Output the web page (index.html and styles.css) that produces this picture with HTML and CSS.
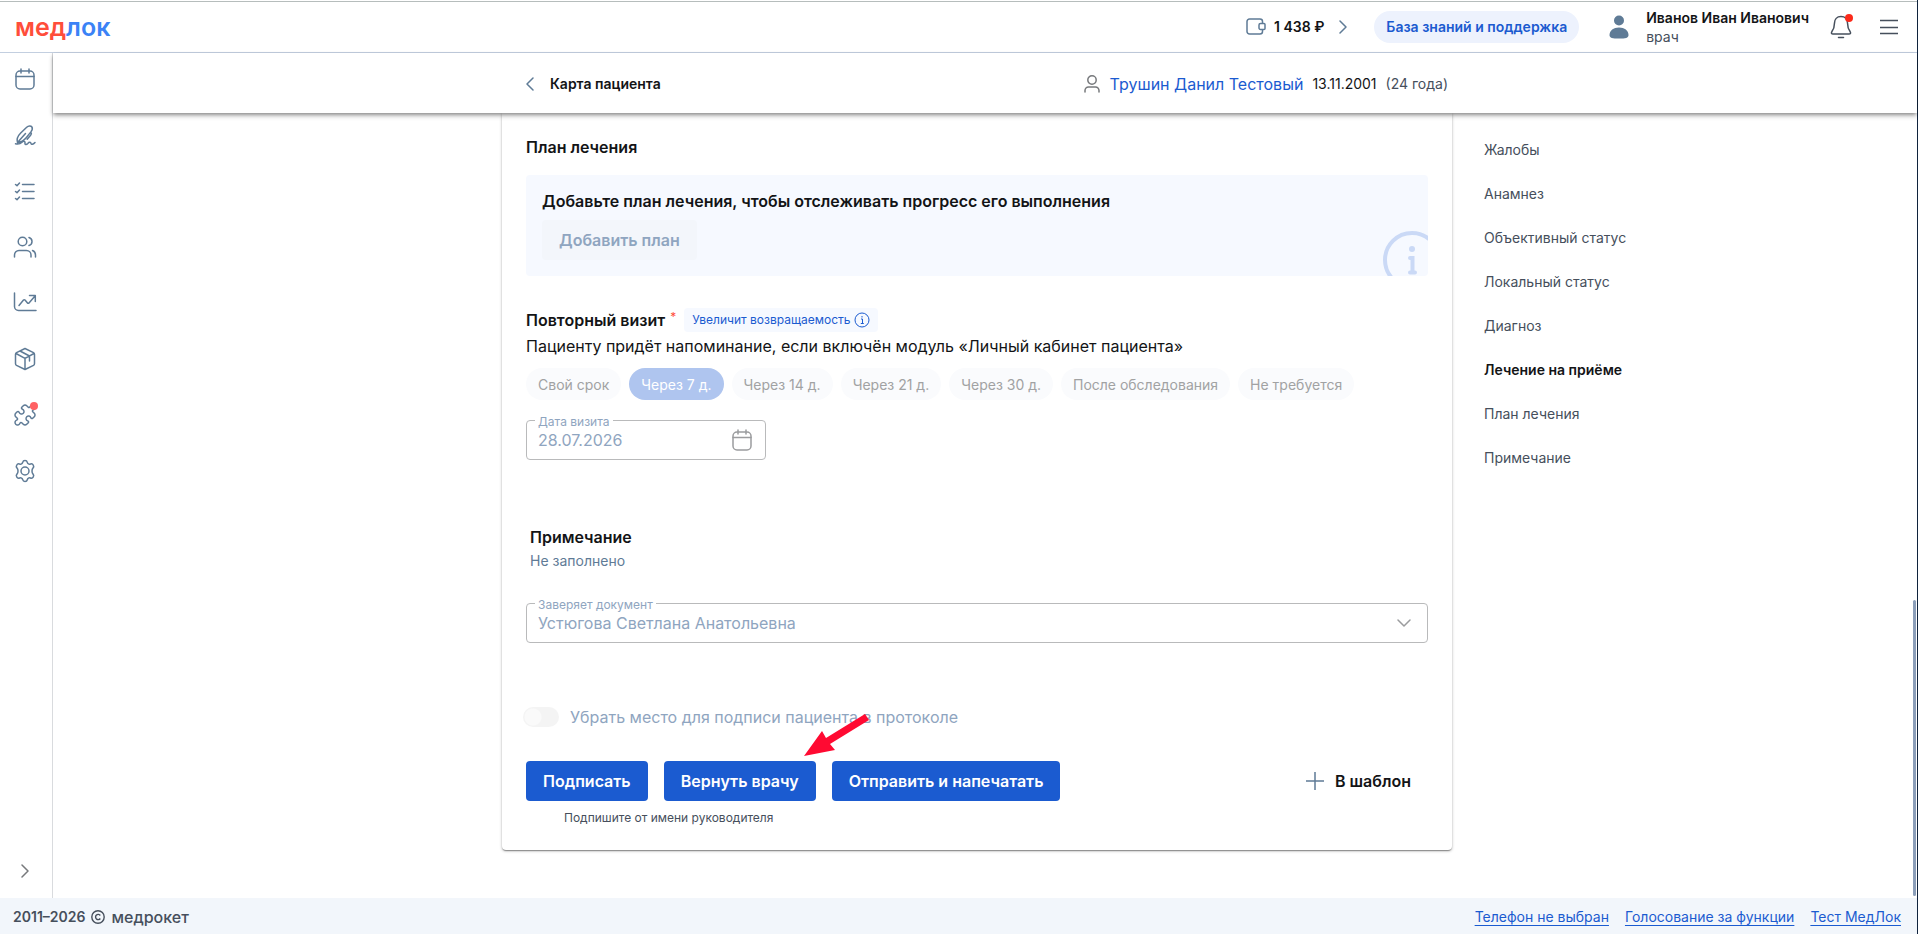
FILE: index.html
```html
<!DOCTYPE html>
<html lang="ru">
<head>
<meta charset="utf-8">
<meta name="viewport" content="width=device-width, initial-scale=1">
<title>Карта пациента — МедЛок</title>
<link rel="stylesheet" href="styles.css">
</head>
<body>
<div class="page">
  <header class="topbar">
    <a class="logo" href="#"><span class="logo-red">мед</span><span class="logo-blue">лок</span></a>
    <div class="topbar-right">
      <a class="balance" href="#">
        <svg class="icon" width="20" height="20" viewBox="0 0 20 20"><path d="M16.5 6V4.500a2.500 2.500 0 0 0-2.500-2.500H3.500A2.500 2.500 0 0 0 1 4.500v10A2.500 2.500 0 0 0 3.500 17H14a2.500 2.500 0 0 0 2.500-2.500V13M14.500 6.500H18a1 1 0 0 1 1 1V11.500a1 1 0 0 1-1 1H14.500a1.500 1.500 0 0 1-1.500-1.500V8a1.500 1.500 0 0 1 1.500-1.500z"/></svg>
        <span>1 438 ₽</span>
        <svg class="icon balance-arrow" width="8" height="14" viewBox="0 0 8 14"><path d="M1 1l6 6-6 6"/></svg>
      </a>
      <a class="help" href="#">База знаний и поддержка</a>
      <div class="user">
        <svg width="20" height="24" viewBox="0 0 20 24"><circle cx="10" cy="5.500" r="5" fill="#5f7b96"/><path d="M.5 20c0-4.500 4-7.500 9.500-7.500s9.500 3 9.500 7.500c0 3-3 3.500-9.500 3.500S.5 23 .5 20z" fill="#5f7b96"/></svg>
        <div class="user-text"><span class="user-name">Иванов Иван Иванович</span><span class="user-role">врач</span></div>
      </div>
      <button class="icon-button bell" aria-label="Уведомления">
        <svg class="icon dark" width="22" height="24" viewBox="0 0 22 24"><path d="M11 1.500c-4.200 0-6.500 3-6.500 6.500 0 5-1 6.500-2.700 8.800-.8 1.200-.3 2.200 1.200 2.200h16c1.500 0 2-1 1.200-2.200C18.500 14.500 17.500 13 17.500 8c0-3.500-2.300-6.500-6.500-6.500zM8.500 22.500h5"/></svg>
        <span class="dot"></span>
      </button>
      <button class="icon-button" aria-label="Меню">
        <svg class="icon dark" width="18" height="16" viewBox="0 0 18 16"><path d="M0 1.500h18M0 8.500h18M0 14.500h18"/></svg>
      </button>
    </div>
  </header>

  <nav class="sidebar" aria-label="Разделы">
    <a href="#" aria-label="Календарь"><svg class="icon" width="24" height="24" viewBox="0 0 24 24"><rect x="3" y="4" width="18" height="18" rx="4"/><path d="M3 9.500h18M8 2v4M16 2v4"/></svg></a>
    <a href="#" aria-label="Подпись"><svg class="icon" width="24" height="24" viewBox="0 0 24 24"><path d="M4.500 19.500c-1-3 .2-6.500 3.200-9.500l6-5.800c1.700-1.600 4.300-1.600 5.200-.2s.3 3.200-1 4.900l-4.700 5.800c-2.400 2.900-5 4.500-8.700 4.800zl8-9M18 9.500c.8.800.3 1.800-.4 2.700l-3.400 4M2.500 20.800c2.500.5 4.800.2 6.500-1.600 1.700-1.700 3.500-.6 3 1-.4 1.700 1.500 1.800 2.800.3 1.300-1.700 3-1.500 3.200 0 .2 1.300 2 1.200 4-1"/></svg></a>
    <a href="#" aria-label="Задачи"><svg class="icon" width="24" height="24" viewBox="0 0 24 24"><path d="M9.500 5.500H21M9.500 12.500H21M9.500 19.500H21M2.500 5.500l1.500 1.200L6.500 4M2.500 12.500l1.500 1.200L6.500 11M2.500 19.500l1.500 1.200L6.500 18"/></svg></a>
    <a href="#" aria-label="Пациенты"><svg class="icon" width="24" height="24" viewBox="0 0 24 24"><circle cx="9.500" cy="6.500" r="4.300"/><path d="M1.500 22v-2a4.500 4.500 0 0 1 4.500-4.500h7.500A4.500 4.500 0 0 1 18 20v2M16 2.500c2 .6 3 2.200 3 4s-1 3.400-3 4M19.500 15.500c2 .8 3 2.400 3 4.500v2"/></svg></a>
    <a href="#" aria-label="Отчёты"><svg class="icon" width="24" height="24" viewBox="0 0 24 24"><path d="M1.500 2v13.500a4 4 0 0 0 4 4H23M6 14.500l4.500-5.500a1 1 0 0 1 1.500 0l2.500 3a1 1 0 0 0 1.500 0L22 5M16.500 4.500h5.800v6"/></svg></a>
    <a href="#" aria-label="Склад"><svg class="icon" width="24" height="24" viewBox="0 0 24 24"><path d="M12 1.500l8.500 4.200a2 2 0 0 1 1 1.800v9a2 2 0 0 1-1 1.800L12 22.500l-8.500-4.200a2 2 0 0 1-1-1.800v-9a2 2 0 0 1 1-1.800zM3 6.500l9 4.800 9-4.800M12 11.300v11M7 4l9.500 5v5"/></svg></a>
    <a class="has-dot" href="#" aria-label="Модули"><svg class="icon" width="24" height="24" viewBox="0 0 24 24"><path d="M19.439 7.850c-.049.322.059.648.289.878l1.568 1.568c.47.47.706 1.087.706 1.704s-.235 1.233-.706 1.704l-1.611 1.611a.98.98 0 0 1-.837.276c-.47-.07-.802-.48-.968-.925a2.501 2.501 0 1 0-3.214 3.214c.446.166.855.497.925.968a.979.979 0 0 1-.276.837l-1.610 1.610a2.404 2.404 0 0 1-1.705.707 2.402 2.402 0 0 1-1.704-.706l-1.568-1.568a1.026 1.026 0 0 0-.877-.29c-.493.074-.84.504-1.020.968a2.500 2.500 0 1 1-3.237-3.237c.464-.18.894-.527.967-1.020a1.026 1.026 0 0 0-.289-.877l-1.568-1.568A2.402 2.402 0 0 1 1.998 12c0-.617.236-1.234.706-1.704L4.230 8.770c.24-.24.581-.353.917-.303.515.077.877.528 1.073 1.010a2.500 2.500 0 1 0 3.259-3.259c-.482-.196-.933-.558-1.010-1.073-.05-.336.062-.676.303-.917l1.525-1.525A2.402 2.402 0 0 1 12 1.998c.617 0 1.234.236 1.704.706l1.568 1.568c.23.23.556.338.877.29.493-.074.84-.504 1.020-.968a2.500 2.500 0 1 1 3.237 3.237c-.464.18-.894.527-.967 1.020Z"/></svg><span class="dot soft"></span></a>
    <a href="#" aria-label="Настройки"><svg class="icon" width="24" height="24" viewBox="0 0 24 24"><circle cx="12" cy="12" r="4"/><path d="M9.700 3.300C10 2 10.800 1.500 12 1.500s2 .5 2.300 1.800c.4 1.600 1.600 2.200 3.100 1.700 1.300-.5 2.300 0 2.900 1.100.7 1.100.6 2-.4 3-1.200 1.100-1.200 4.700 0 5.800 1 1 1.100 1.900.4 3-.6 1.100-1.600 1.600-2.900 1.100-1.500-.5-2.700.1-3.100 1.700-.3 1.300-1.100 1.800-2.300 1.800s-2-.5-2.300-1.800C9.300 19.100 8.100 18.500 6.600 19c-1.300.5-2.300 0-2.900-1.100-.7-1.100-.6-2 .4-3 1.200-1.100 1.200-4.700 0-5.800-1-1-1.100-1.900-.4-3C4.300 5 5.300 4.500 6.600 5c1.500.5 2.700-.1 3.100-1.700z"/></svg></a>
    <button class="expand" aria-label="Развернуть меню"><svg class="icon grey" width="8" height="14" viewBox="0 0 8 14"><path d="M1 1l6 6-6 6"/></svg></button>
  </nav>

  <main class="main">
    <div class="subheader columns">
      <div class="subheader-inner">
        <a class="back" href="#"><svg class="icon" width="8" height="14" viewBox="0 0 8 14"><path d="M7 1L1 7l6 6"/></svg>Карта пациента</a>
        <div class="patient">
          <svg class="icon grey" width="16" height="18" viewBox="0 0 16 18"><circle cx="8" cy="5" r="4.200"/><path d="M1 17v-1.500A3.500 3.500 0 0 1 4.500 12h7a3.500 3.500 0 0 1 3.500 3.500V17"/></svg>
          <a class="patient-name" href="#">Трушин Данил Тестовый</a>
          <span>13.11.2001</span>
          <span class="age">(24 года)</span>
        </div>
      </div>
    </div>

    <div class="columns">
      <form class="card">
        <section>
          <h2>План лечения</h2>
          <div class="banner">
            <h3>Добавьте план лечения, чтобы отслеживать прогресс его выполнения</h3>
            <button class="button add-plan" type="button" disabled>Добавить план</button>
            <svg class="banner-icon" width="60" height="60" viewBox="0 0 60 60"><circle cx="30" cy="30" r="27" fill="none" stroke="#cad9f6" stroke-width="4"/><circle cx="30" cy="19" r="3" fill="#cad9f6"/><path d="M28 28h2.500v14M28 42.500h5" fill="none" stroke="#cad9f6" stroke-width="4" stroke-linecap="round"/></svg>
          </div>
        </section>

        <section class="visit">
          <div class="visit-head">
            <h2>Повторный визит<span class="required">*</span></h2>
            <span class="badge">Увеличит возвращаемость
              <svg width="16" height="16" viewBox="0 0 16 16" fill="none" stroke="#1b5bd0"><circle cx="8" cy="8" r="7"/><path d="M7 7h1.500v4.500M6.800 11.500h3M8 4v1.500"/></svg>
            </span>
          </div>
          <p>Пациенту придёт напоминание, если включён модуль «Личный кабинет пациента»</p>
          <div class="chips">
            <button class="chip" type="button" disabled>Свой срок</button>
            <button class="chip selected" type="button" disabled>Через 7 д.</button>
            <button class="chip" type="button" disabled>Через 14 д.</button>
            <button class="chip" type="button" disabled>Через 21 д.</button>
            <button class="chip" type="button" disabled>Через 30 д.</button>
            <button class="chip" type="button" disabled>После обследования</button>
            <button class="chip" type="button" disabled>Не требуется</button>
          </div>
          <div class="field date-field">
            <label for="visit-date">Дата визита</label>
            <input id="visit-date" type="text" value="28.07.2026" disabled>
            <svg class="icon light" width="24" height="24" viewBox="0 0 24 24"><rect x="3" y="4" width="18" height="18" rx="4"/><path d="M3 9.500h18M8 2v4M16 2v4"/></svg>
          </div>
        </section>

        <section class="note">
          <h2>Примечание</h2>
          <p>Не заполнено</p>
        </section>

        <div class="field signer-field">
          <label for="signer">Заверяет документ</label>
          <select id="signer" disabled><option>Устюгова Светлана Анатольевна</option></select>
          <svg class="icon light" width="14" height="8" viewBox="0 0 14 8"><path d="M1 1l6 6 6-6"/></svg>
        </div>

        <label class="toggle"><input type="checkbox" disabled>Убрать место для подписи пациента в протоколе</label>

        <div class="actions">
          <button class="button primary" type="button">Подписать</button>
          <button class="button primary" type="button">Вернуть врачу</button>
          <button class="button primary" type="button">Отправить и напечатать</button>
          <button class="button template" type="button"><svg class="icon" width="18" height="18" viewBox="0 0 18 18"><path d="M9 0v18M0 9h18"/></svg>В шаблон</button>
          <svg class="pointer" width="68" height="44" viewBox="0 0 68 44" fill="#ff0a32"><path d="M1 43L19 18l4 7L62 1l4 6-39 24 5 6z"/></svg>
        </div>
        <p class="hint">Подпишите от имени руководителя</p>
      </form>

      <nav class="toc" aria-label="Содержание">
        <a href="#">Жалобы</a>
        <a href="#">Анамнез</a>
        <a href="#">Объективный статус</a>
        <a href="#">Локальный статус</a>
        <a href="#">Диагноз</a>
        <a class="current" href="#">Лечение на приёме</a>
        <a href="#">План лечения</a>
        <a href="#">Примечание</a>
      </nav>
    </div>
    <div class="scroll-thumb"></div>
  </main>

  <footer class="footer">
    <div class="copyright">2011–2026 <svg width="14" height="14" viewBox="0 0 14 14" fill="none" stroke="#464f5c" stroke-width="1.400"><circle cx="7" cy="7" r="6.200"/><path d="M9.300 5.500a2.600 2.600 0 1 0 0 3"/></svg> <span class="company">медрокет</span></div>
    <div class="footer-links"><a href="#">Телефон не выбран</a><a href="#">Голосование за функции</a><a href="#">Тест МедЛок</a></div>
  </footer>
</div>
</body>
</html>
```

FILE: styles.css
```css
* { box-sizing: border-box; }

body {
  margin: 0;
  font-family: Inter, "Liberation Sans", sans-serif;
  font-size: 14px;
  line-height: 20px;
  color: #131416;
  background: #fff;
}

h2, h3, p { margin: 0; font-size: 16px; }
h2, h3 { font-weight: 600; line-height: 24px; }
a { color: inherit; text-decoration: none; }
button, input, select { font: inherit; color: inherit; border: 0; background: none; padding: 0; margin: 0; }
svg { display: block; flex: none; }

.icon { fill: none; stroke: #5f7b96; stroke-width: 1.5; stroke-linecap: round; stroke-linejoin: round; }
.icon.dark { stroke: #464f5c; }
.icon.grey { stroke: #77797c; }
.icon.light { stroke: #9b9c9e; }

.page {
  display: grid;
  grid-template-columns: 53px minmax(0, 1fr);
  grid-template-rows: 53px 1fr auto;
  min-height: 100vh;
  border-right: 1px solid #10233d;
}

/* Top bar */
.topbar {
  grid-column: 1 / -1;
  display: flex;
  align-items: center;
  justify-content: space-between;
  padding: 2px 19px 0 15px;
  border-bottom: 1px solid #c3cfe0;
  background: linear-gradient(#b6bdbc, #b6bdbc) 0 1px / 100% 1px no-repeat;
}
.logo { font-size: 25px; font-weight: 600; line-height: 28px; }
.logo-red { color: #ff4d3a; }
.logo-blue { color: #3b82f6; }
.topbar-right { display: flex; align-items: center; }
.balance { display: flex; align-items: center; gap: 8px; font-weight: 600; margin-right: 27px; }
.balance-arrow { margin-left: 7px; }
.help {
  padding: 6px 12px;
  border-radius: 16px;
  background: #edf2fd;
  color: #1b5bd0;
  font-weight: 600;
  margin-right: 30px;
}
.user { display: flex; align-items: center; gap: 17px; margin-right: 21px; }
.user-text { display: flex; flex-direction: column; line-height: 19px; }
.user-name { font-weight: 600; }
.user-role { color: #464f5c; }
.icon-button { position: relative; display: flex; }
.bell { margin-right: 28px; }
.dot {
  position: absolute;
  top: -1px;
  right: -1px;
  width: 8px;
  height: 8px;
  border-radius: 50%;
  background: #fb2a1a;
}
.dot.soft { background: #ff6163; }

/* Sidebar */
.sidebar {
  display: flex;
  flex-direction: column;
  align-items: center;
  gap: 32px;
  padding: 14px 3px 20px 0;
  border-right: 1px solid #d9dbde;
}
.has-dot { position: relative; }
.expand { margin-top: auto; display: flex; }

/* Content */
.main { position: relative; }
.columns {
  display: grid;
  grid-template-columns: 1fr minmax(0, 950px) 1fr;
  padding-right: 16px;
}
.subheader {
  position: relative;
  z-index: 1;
  background: #fff;
  box-shadow: 0 2px 4px -1px rgba(0, 0, 0, .4), 0 3px 5px rgba(0, 0, 0, .2);
}
.subheader-inner {
  grid-column: 2;
  display: flex;
  align-items: center;
  justify-content: space-between;
  padding: 21px 4px 19px 24px;
}
.back { display: flex; align-items: center; gap: 16px; font-weight: 600; }
.patient { display: flex; align-items: center; gap: 9px; }
.patient-name { color: #1b5bd0; font-size: 16px; margin-left: 1px; }
.age { color: #464f5c; }

.card {
  grid-column: 2;
  margin-bottom: 48px;
  padding: 22px 24px;
  border-radius: 0 0 4px 4px;
  box-shadow: 0 2px 1px -1px rgba(0, 0, 0, .2), 0 1px 1px rgba(0, 0, 0, .14), 0 1px 3px rgba(0, 0, 0, .3);
}

.banner {
  position: relative;
  overflow: hidden;
  margin-top: 16px;
  padding: 15px 16px 16px;
  border-radius: 4px;
  background: #f6f9ff;
}
.banner h3 { line-height: 22px; margin-bottom: 8px; }
.banner-icon { position: absolute; right: -14px; bottom: -14px; }

.button {
  height: 40px;
  padding: 0 17px;
  border-radius: 4px;
  font-size: 16px;
  font-weight: 600;
}
.primary { background: #1b5bd0; color: #fff; }
.add-plan { background: #f3f6fb; color: #8fa5c0; }

.visit { margin-top: 32px; }
.visit-head { display: flex; align-items: center; gap: 8px; }
.required { color: #ff4d3a; font-size: 12px; font-weight: 400; vertical-align: 5px; line-height: 12px; margin-left: 5px; }
.badge {
  display: flex;
  align-items: center;
  gap: 4px;
  height: 24px;
  padding: 0 8px;
  border-radius: 4px;
  background: #f6f9ff;
  color: #1b5bd0;
  font-size: 12px;
}
.visit p { margin-top: 3px; line-height: 22px; }
.chips { display: flex; flex-wrap: wrap; gap: 8px; margin-top: 11px; }
.chip { height: 32px; padding: 1px 12px 0; border-radius: 16px; background: #fafbfd; color: #a1a2a3; }
.chip.selected { background: #afc5ef; color: #fff; }

/* Outlined fields with a label in the border */
.field {
  position: relative;
  display: flex;
  align-items: center;
  height: 40px;
  padding: 0 11px;
  border: 1px solid #b9babb;
  border-radius: 4px;
  color: #8fa5c0;
  font-size: 16px;
}
.field label {
  position: absolute;
  top: -8px;
  left: 8px;
  padding: 0 3px;
  background: #fff;
  font-size: 12px;
  line-height: 18px;
}
.field input, .field select { flex: 1; min-width: 0; opacity: 1; appearance: none; }
.date-field { width: 240px; margin-top: 20px; }
.signer-field { margin-top: 32px; padding-right: 16px; }

.note { margin-top: 65px; padding-left: 4px; }
.note p { margin-top: 2px; font-size: 14px; color: #5f7b96; }

.toggle {
  display: flex;
  align-items: center;
  gap: 11px;
  margin: 64px 0 0 -3px;
  font-size: 16px;
  color: #8fa5c0;
}
.toggle input {
  appearance: none;
  width: 36px;
  height: 20px;
  border-radius: 10px;
  background: radial-gradient(circle at 10px 10px, #fafafa 8px, #f4f4f4 9px);
}

.actions { position: relative; display: flex; gap: 16px; margin-top: 34px; }
.template { display: flex; align-items: center; gap: 11px; margin-left: auto; }
.pointer { position: absolute; left: 277px; top: -48px; }
.hint { margin: 9px 0 2px 38px; font-size: 12px; line-height: 16px; color: #464f5c; }

.toc { display: flex; flex-direction: column; gap: 24px; padding: 27px 0 0 32px; color: #464f5c; }
.toc .current { color: #131416; font-weight: 600; }

.scroll-thumb {
  position: absolute;
  right: 1px;
  bottom: 2px;
  width: 3px;
  height: 35%;
  border-radius: 2px;
  background: #8c9fba;
}

/* Footer */
.footer {
  grid-column: 1 / -1;
  display: flex;
  align-items: center;
  justify-content: space-between;
  padding: 9px 16px 7px 13px;
  background: #f2f6fb;
}
.copyright { display: flex; align-items: center; gap: 6px; font-weight: 600; color: #464f5c; }
.company { font-size: 16px; font-weight: 500; }
.footer-links { display: flex; gap: 16px; color: #1b5bd0; }
.footer-links a { text-decoration: underline; text-underline-offset: 3px; }
```
